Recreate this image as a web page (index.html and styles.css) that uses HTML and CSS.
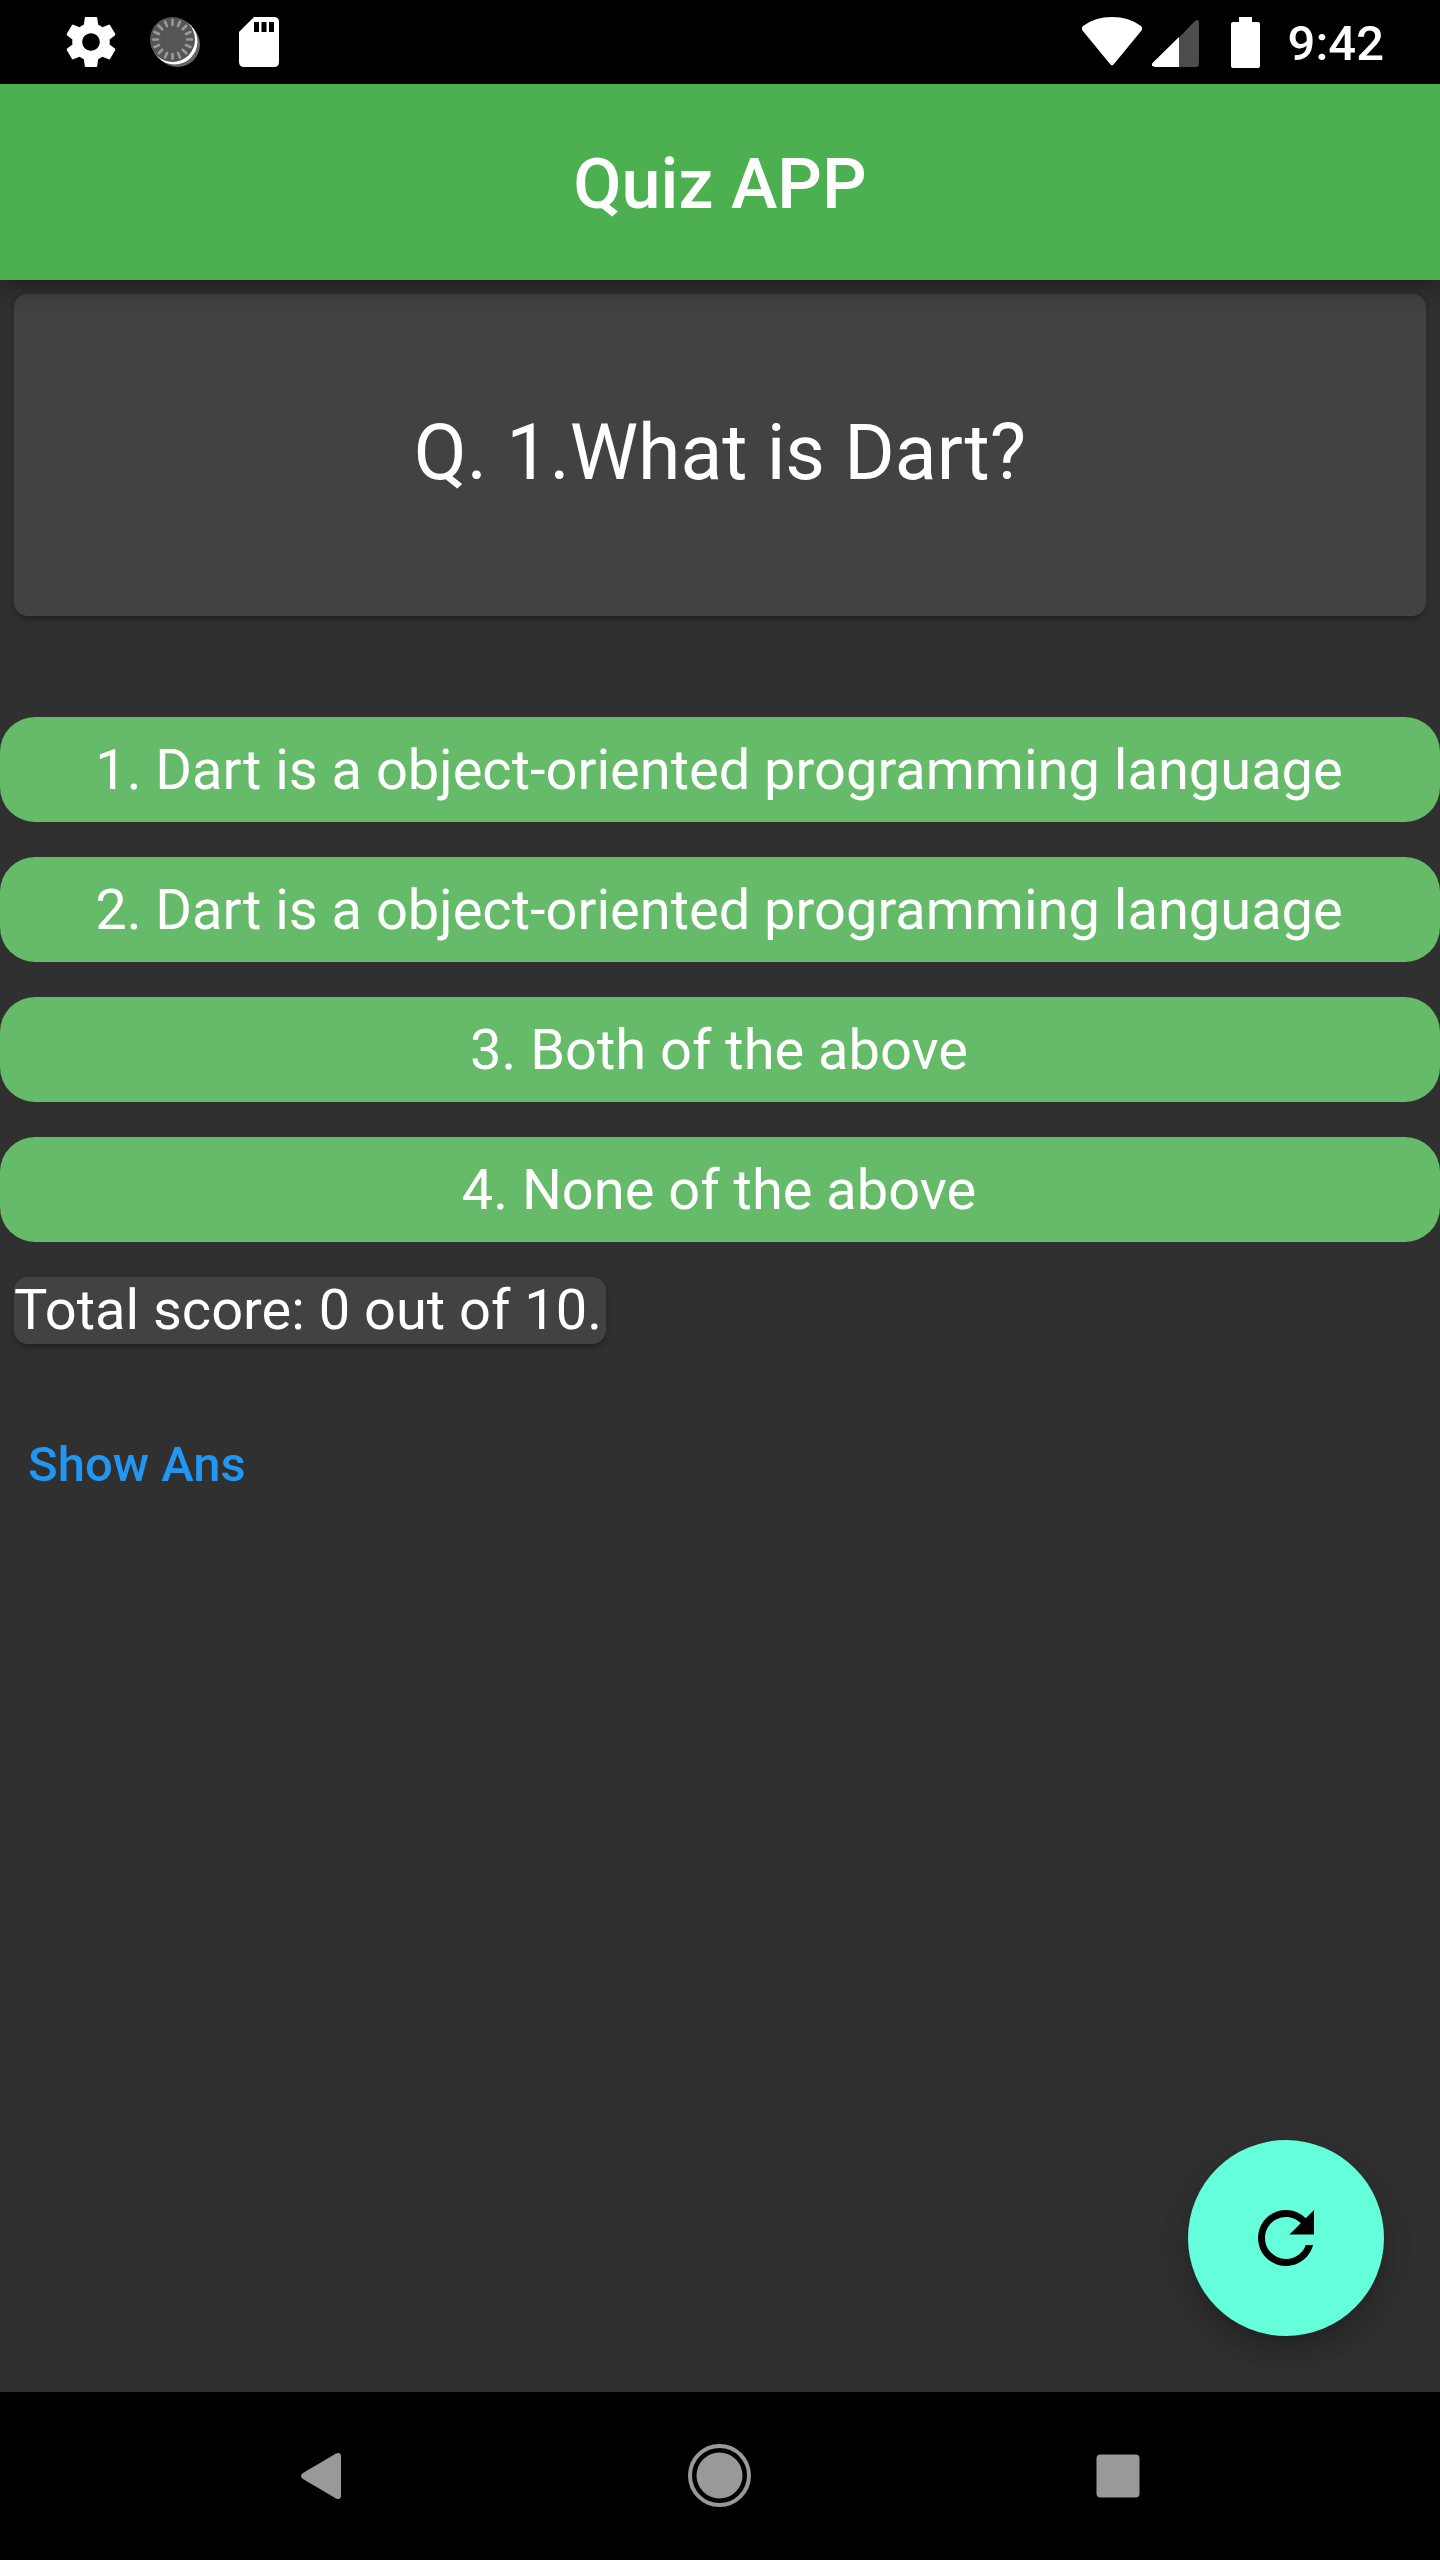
FILE: index.html
```html
<!DOCTYPE html>
<html lang="en">
<head>
<meta charset="utf-8">
<title>Quiz APP</title>
<link rel="stylesheet" href="styles.css">
</head>
<body>
<div class="status-bar">
  <div class="notifications">
    <svg width="50" height="50" viewBox="2 2 20 20" aria-hidden="true"><path fill="#fff" d="M19.43 12.98c.04-.32.07-.64.07-.98s-.03-.66-.07-.98l2.11-1.65c.19-.15.24-.42.12-.64l-2-3.46c-.12-.22-.39-.3-.61-.22l-2.49 1c-.52-.4-1.08-.73-1.69-.98l-.38-2.65C14.46 2.18 14.25 2 14 2h-4c-.25 0-.46.18-.49.42l-.38 2.65c-.61.25-1.17.59-1.69.98l-2.49-1c-.23-.09-.49 0-.61.22l-2 3.46c-.13.22-.07.49.12.64l2.11 1.65c-.04.32-.07.65-.07.98s.03.66.07.98l-2.11 1.65c-.19.15-.24.42-.12.64l2 3.46c.12.22.39.3.61.22l2.49-1c.52.4 1.08.73 1.69.98l.38 2.65c.03.24.24.42.49.42h4c.25 0 .46-.18.49-.42l.38-2.65c.61-.25 1.17-.59 1.69-.98l2.49 1c.23.09.49 0 .61-.22l2-3.46c.12-.22.07-.49-.12-.64l-2.11-1.65zM12 15.5c-1.93 0-3.5-1.57-3.5-3.5s1.57-3.5 3.5-3.5 3.5 1.57 3.5 3.5-1.57 3.5-3.5 3.5z"/></svg>
    <svg width="50" height="50" viewBox="0 0 50 50" aria-hidden="true">
      <circle cx="27.500" cy="27.500" r="22.500" fill="#666"/>
      <circle cx="24.500" cy="24.500" r="23" fill="#fff"/>
      <circle cx="22.500" cy="22.500" r="22.500" fill="#555"/>
      <g stroke="#999" stroke-width="2.600" stroke-linecap="round">
        <path id="tick" d="M22.500 3v5M22.500 37v5"/>
        <use href="#tick" transform="rotate(22.500 22.500 22.500)"/>
        <use href="#tick" transform="rotate(45 22.500 22.500)"/>
        <use href="#tick" transform="rotate(67.500 22.500 22.500)"/>
        <use href="#tick" transform="rotate(90 22.500 22.500)"/>
        <use href="#tick" transform="rotate(112.500 22.500 22.500)"/>
        <use href="#tick" transform="rotate(135 22.500 22.500)"/>
        <use href="#tick" transform="rotate(157.500 22.500 22.500)"/>
      </g>
    </svg>
    <svg width="50" height="50" viewBox="0 0 50 50" aria-hidden="true"><path fill="#fff" d="M20 0h20q5 0 5 5v40q0 5-5 5H10q-5 0-5-5V15z"/><path d="M20 5h5v10h-5zM27.500 5h5v10h-5zM35 5h5v10h-5z"/></svg>
  </div>
  <div class="system">
    <svg class="wifi" width="60" height="50" viewBox="0 0 60 50" aria-hidden="true"><path fill="#fff" d="M1 9Q13 0 30 0t29 9q2 2 .500 4.500L32 47q-2 2.500-4 0L.500 13.500Q-1 11 1 9z"/></svg>
    <svg class="signal" width="47" height="50" viewBox="0 0 47 50" aria-hidden="true"><path fill="#4d4d4d" d="M27 20.500L43 4q4-2.500 4 2v41q0 3-3 3H27z"/><path fill="#fff" d="M27 20v30H3q-4.500-1-2.500-4z"/></svg>
    <svg class="battery" width="29" height="51" viewBox="0 0 29 51" aria-hidden="true"><path fill="#fff" d="M8 0h13v5h6q2 0 2 2v42q0 2-2 2H2q-2 0-2-2V7q0-2 2-2h6z"/></svg>
    <time class="clock">9:42</time>
  </div>
</div>
<header class="app-bar"><h1 class="title">Quiz APP</h1></header>
<main class="content">
  <h2 class="card question">Q. 1.What is Dart?</h2>
  <div class="options">
    <button class="option" type="button">1. Dart is a object-oriented programming language</button>
    <button class="option" type="button">2. Dart is a object-oriented programming language</button>
    <button class="option" type="button">3. Both of the above</button>
    <button class="option" type="button">4. None of the above</button>
  </div>
  <p class="card score">Total score: 0 out of 10.</p>
  <button class="show-answer" type="button">Show Ans</button>
  <button class="restart" type="button" aria-label="Restart quiz">
    <svg width="84" height="84" viewBox="0 0 24 24" aria-hidden="true"><path d="M17.650 6.350C16.200 4.900 14.210 4 12 4c-4.420 0-7.990 3.580-7.990 8s3.570 8 7.990 8c3.730 0 6.840-2.550 7.730-6h-2.080c-.820 2.330-3.040 4-5.650 4-3.310 0-6-2.690-6-6s2.690-6 6-6c1.660 0 3.140.690 4.220 1.780L13 11h7V4l-2.350 2.350z"/></svg>
  </button>
</main>
<nav class="nav-bar" aria-label="System">
  <button class="nav-button" type="button" aria-label="Back"><svg width="84" height="84" viewBox="0 0 84 84"><path fill="#999" d="M24 39L57 19.500q5-2 5 3v39q0 5-5 3L24 45q-4-3 0-6z"/></svg></button>
  <button class="nav-button" type="button" aria-label="Home"><svg width="84" height="84" viewBox="0 0 84 84"><circle cx="41.500" cy="41.500" r="29.500" fill="none" stroke="#999" stroke-width="4"/><circle cx="41.500" cy="41.500" r="23" fill="#999"/></svg></button>
  <button class="nav-button" type="button" aria-label="Recent apps"><svg width="84" height="84" viewBox="0 0 84 84"><rect x="19.500" y="20.500" width="43" height="43" rx="4" fill="#999"/></svg></button>
</nav>
</body>
</html>
```
FILE: styles.css
```css
* {
  box-sizing: border-box;
}

body {
  display: flex;
  flex-direction: column;
  min-height: 100vh;
  margin: 0;
  background: #303030;
  color: #fff;
  font-family: Roboto, sans-serif;
  font-size: 56px;
}

button {
  padding: 0;
  border: 0;
  background: none;
  color: inherit;
  font: inherit;
  cursor: pointer;
}

svg {
  display: block;
}

.status-bar {
  display: flex;
  justify-content: space-between;
  align-items: center;
  height: 84px;
  padding: 0 56px 0 66px;
  background: #000;
}

.notifications,
.system {
  display: flex;
  align-items: center;
}

.notifications {
  gap: 34px;
}

.signal {
  margin-left: 10px;
}

.battery {
  margin-left: 32px;
}

.clock {
  margin-left: 28px;
  padding-top: 4px;
  font-size: 49px;
  font-weight: 500;
  line-height: 56px;
}

.app-bar {
  position: relative;
  z-index: 1;
  display: flex;
  justify-content: center;
  align-items: center;
  height: 196px;
  padding-top: 4px;
  background: #4caf50;
  box-shadow: 0 7px 14px -3px rgba(0, 0, 0, .2), 0 14px 18px rgba(0, 0, 0, .1), 0 4px 35px rgba(0, 0, 0, .06);
}

.title {
  margin: 0;
  font-size: 70px;
  font-weight: 500;
}

.content {
  position: relative;
  display: flex;
  flex: 1;
  flex-direction: column;
  align-items: flex-start;
}

.card {
  border-radius: 14px;
  background: #424242;
  box-shadow: 0 7px 4px -4px rgba(0, 0, 0, .15), 0 4px 4px rgba(0, 0, 0, .1), 0 2px 6px rgba(0, 0, 0, .1);
}

.question {
  align-self: stretch;
  margin: 14px;
  padding: 110px 14px 114px;
  font-size: 77px;
  font-weight: 400;
  line-height: 98px;
  text-align: center;
}

.options {
  display: flex;
  flex-direction: column;
  align-self: stretch;
  gap: 35px;
  margin-top: 87px;
}

.option {
  min-height: 105px;
  padding-right: 2px;
  border-radius: 35px;
  background: #66bb6a;
}

.score {
  margin: 35px 14px;
  padding-right: 4px;
  line-height: 67px;
}

.show-answer {
  min-height: 126px;
  margin-top: 22px;
  padding: 0 28px;
  color: #2196f3;
  font-size: 49px;
  font-weight: 500;
}

.restart {
  position: absolute;
  right: 56px;
  bottom: 56px;
  display: grid;
  place-items: center;
  width: 196px;
  height: 196px;
  border-radius: 50%;
  background: #64ffda;
  box-shadow: 0 11px 18px -4px rgba(0, 0, 0, .14), 0 21px 35px rgba(0, 0, 0, .12), 0 4px 40px rgba(0, 0, 0, .06);
}

.nav-bar {
  display: flex;
  position: relative;
  height: 168px;
  padding: 0 121px;
  background: #000;
}

.nav-button {
  display: grid;
  flex: 1;
  place-items: center;
}
```
